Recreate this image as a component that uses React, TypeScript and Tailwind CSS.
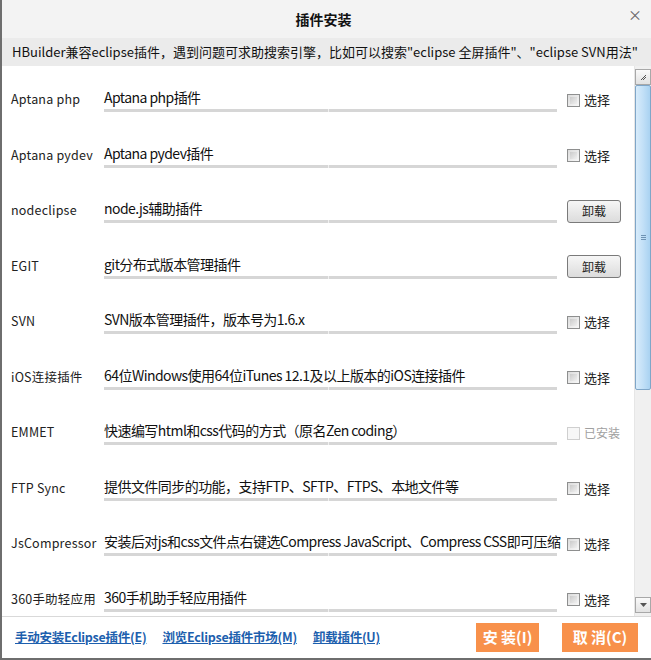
import React from 'react';

type Plugin = {
  name: string;
  desc: string;
  state: 'select' | 'uninstall' | 'installed';
};

const plugins: Plugin[] = [
  { name: 'Aptana php', desc: 'Aptana php插件', state: 'select' },
  { name: 'Aptana pydev', desc: 'Aptana pydev插件', state: 'select' },
  { name: 'nodeclipse', desc: 'node.js辅助插件', state: 'uninstall' },
  { name: 'EGIT', desc: 'git分布式版本管理插件', state: 'uninstall' },
  { name: 'SVN', desc: 'SVN版本管理插件，版本号为1.6.x', state: 'select' },
  { name: 'iOS连接插件', desc: '64位Windows使用64位iTunes 12.1及以上版本的iOS连接插件', state: 'select' },
  { name: 'EMMET', desc: '快速编写html和css代码的方式（原名Zen coding）', state: 'installed' },
  { name: 'FTP Sync', desc: '提供文件同步的功能，支持FTP、SFTP、FTPS、本地文件等', state: 'select' },
  { name: 'JsCompressor', desc: '安装后对js和css文件点右键选Compress JavaScript、Compress CSS即可压缩', state: 'select' },
  { name: '360手助轻应用', desc: '360手机助手轻应用插件', state: 'select' },
];

const font = { fontFamily: '"Noto Sans CJK SC", "Open Sans", sans-serif' };

function Checkbox({ disabled }: { disabled?: boolean }) {
  return (
    <span
      className={
        disabled
          ? 'w-[13px] h-[13px] border border-[#cfcfcf] bg-[#f7f7f7]'
          : 'w-[13px] h-[13px] border border-[#8e8f8f] bg-gradient-to-br from-[#dcdcdc] to-[#f8f8f8] p-[2px]'
      }
    >
      {!disabled && <span className="block w-full h-full bg-gradient-to-br from-[#cbcbcb] to-[#f0f0f0]" />}
    </span>
  );
}

function Row({ p }: { p: Plugin }) {
  return (
    <div className="h-[55.5px] shrink-0 flex items-start pt-[21px]">
      <div className="w-[102px] pl-[9px] text-[12.5px] leading-[24px] text-[#222] whitespace-nowrap tracking-[0.2px]">{p.name}</div>
      <div className="w-[453px] flex flex-col">
        <div className="text-[14px] leading-[20px] text-[#111] whitespace-nowrap tracking-[-0.55px]">{p.desc}</div>
        <div className="mt-[2px] h-[3px] bg-[#d6d6d6] flex">
          <span className="ml-[224px] w-px h-[3px] bg-[#f0f0f0]" />
        </div>
      </div>
      <div className="ml-[10px] flex items-center h-[24px]">
        {p.state === 'uninstall' ? (
          <button className="mt-[2px] w-[54px] h-[23px] rounded-[3px] border border-[#7a7a7a] bg-gradient-to-b from-[#f6f6f6] to-[#dcdcdc] text-[12px] text-[#222] leading-none">
            卸载
          </button>
        ) : (
          <div className="flex items-center gap-[4px] mt-[2px]">
            <Checkbox disabled={p.state === 'installed'} />
            <span className={p.state === 'installed' ? 'text-[12px] text-[#a0a0a0]' : 'text-[13px] text-[#222]'}>
              {p.state === 'installed' ? '已安装' : '选择'}
            </span>
          </div>
        )}
      </div>
    </div>
  );
}

function Scrollbar() {
  return (
    <div className="w-[17px] flex flex-col bg-[#f0f0f0] border-l border-[#e6e6e6] pt-[3px] pb-[3px]">
      <div className="h-[16px] border border-[#a8a8a8] bg-gradient-to-b from-[#fafafa] to-[#e2e2e2] flex items-center justify-center">
        <svg width="7" height="7" viewBox="0 0 7 7"><path d="M1 6 L6 1 M3 6 L6 3" stroke="#555" strokeWidth="1" /></svg>
      </div>
      <div className="h-[305px] border border-[#7fa6c8] rounded-[2px] bg-gradient-to-r from-[#d8ecfb] via-[#c2e0f7] to-[#a9d2f1] flex items-center justify-center">
        <div className="flex flex-col gap-[1px]">
          <span className="w-[5px] h-px bg-[#6f93b3]" />
          <span className="w-[5px] h-px bg-[#6f93b3]" />
          <span className="w-[5px] h-px bg-[#6f93b3]" />
        </div>
      </div>
      <div className="flex-1" />
      <div className="h-[16px] border border-[#a8a8a8] bg-gradient-to-b from-[#fafafa] to-[#e2e2e2] flex items-center justify-center">
        <svg width="7" height="4" viewBox="0 0 7 4"><path d="M0 0 L7 0 L3.5 4 Z" fill="#555" /></svg>
      </div>
    </div>
  );
}

export default function App() {
  return (
    <div className="w-[651px] h-[660px] flex flex-col bg-white border-l-2 border-b-2 border-[#6e6e6e]" style={font}>
      {/* title */}
      <div className="h-[38px] bg-[#f3f3f3] flex items-center relative">
        <div className="flex-1 text-center text-[14px] font-bold text-[#111] pr-[6px]">插件安装</div>
        <span className="absolute right-[9px] top-[4px] text-[14px] text-[#666]">×</span>
      </div>
      {/* hint */}
      <div className="h-[28px] bg-[#ebebeb] flex items-center pl-[10px] text-[13px] text-[#111] whitespace-nowrap">
        HBuilder兼容eclipse插件，遇到问题可求助搜索引擎，比如可以搜索"eclipse 全屏插件"、"eclipse SVN用法"
      </div>
      {/* list */}
      <div className="h-[550px] flex">
        <div className="flex-1 overflow-hidden">
          {plugins.map((p) => (
            <Row key={p.name} p={p} />
          ))}
        </div>
        <Scrollbar />
      </div>
      {/* footer */}
      <div className="flex-1 border-t border-[#d9d9d9] flex items-center pl-[13px] pr-[13px]">
        <div className="flex gap-[16px] text-[12.5px] font-bold text-[#1d5fae] underline tracking-[-0.25px]">
          <span>手动安装Eclipse插件(E)</span>
          <span>浏览Eclipse插件市场(M)</span>
          <span>卸载插件(U)</span>
        </div>
        <div className="flex-1" />
        <div className="flex gap-[23px]">
          <button className="w-[63px] h-[29px] bg-[#f8914b] text-white text-[15px] font-bold">安 装(I)</button>
          <button className="w-[76px] h-[29px] bg-[#f8914b] text-white text-[15px] font-bold">取 消(C)</button>
        </div>
      </div>
    </div>
  );
}
